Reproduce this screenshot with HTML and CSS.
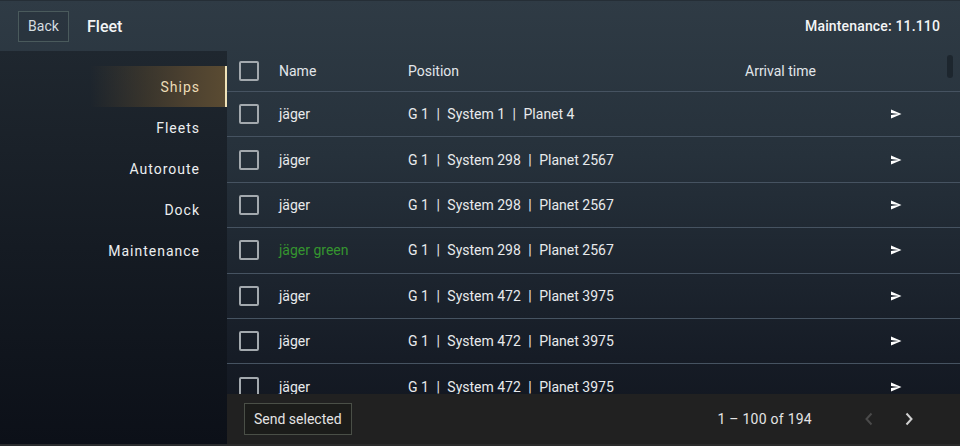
FILE: index.html
```html
<!DOCTYPE html>
<html lang="en">
<head>
<meta charset="utf-8">
<title>Fleet</title>
<link rel="stylesheet" href="styles.css">
</head>
<body>
<div class="app">
  <header class="topbar">
    <button class="btn back">Back</button>
    <h1 class="title">Fleet</h1>
    <div class="maint">Maintenance: 11.110</div>
  </header>
  <div class="main">
    <nav class="sidebar">
      <a class="nav-item active">Ships</a>
      <a class="nav-item">Fleets</a>
      <a class="nav-item">Autoroute</a>
      <a class="nav-item">Dock</a>
      <a class="nav-item">Maintenance</a>
    </nav>
    <section class="content">
      <div class="table-wrap">
        <div class="row head">
          <span class="cell"><span class="cb"></span></span>
          <span class="cell">Name</span>
          <span class="cell">Position</span>
          <span class="cell">Arrival time</span>
          <span class="cell"></span>
        </div>
        <div class="row">
          <span class="cell"><span class="cb"></span></span>
          <span class="cell">jäger</span>
          <span class="cell pos">G 1 <i>|</i> System 1 <i>|</i> Planet 4</span>
          <span class="cell"></span>
          <span class="cell act"><svg viewBox="0 0 24 24" class="send"><path d="M2.01 21L23 12 2.01 3 2 10l15 2-15 2z"/></svg></span>
        </div>
        <div class="row">
          <span class="cell"><span class="cb"></span></span>
          <span class="cell">jäger</span>
          <span class="cell pos">G 1 <i>|</i> System 298 <i>|</i> Planet 2567</span>
          <span class="cell"></span>
          <span class="cell act"><svg viewBox="0 0 24 24" class="send"><path d="M2.01 21L23 12 2.01 3 2 10l15 2-15 2z"/></svg></span>
        </div>
        <div class="row">
          <span class="cell"><span class="cb"></span></span>
          <span class="cell">jäger</span>
          <span class="cell pos">G 1 <i>|</i> System 298 <i>|</i> Planet 2567</span>
          <span class="cell"></span>
          <span class="cell act"><svg viewBox="0 0 24 24" class="send"><path d="M2.01 21L23 12 2.01 3 2 10l15 2-15 2z"/></svg></span>
        </div>
        <div class="row">
          <span class="cell"><span class="cb"></span></span>
          <span class="cell green">jäger green</span>
          <span class="cell pos">G 1 <i>|</i> System 298 <i>|</i> Planet 2567</span>
          <span class="cell"></span>
          <span class="cell act"><svg viewBox="0 0 24 24" class="send"><path d="M2.01 21L23 12 2.01 3 2 10l15 2-15 2z"/></svg></span>
        </div>
        <div class="row">
          <span class="cell"><span class="cb"></span></span>
          <span class="cell">jäger</span>
          <span class="cell pos">G 1 <i>|</i> System 472 <i>|</i> Planet 3975</span>
          <span class="cell"></span>
          <span class="cell act"><svg viewBox="0 0 24 24" class="send"><path d="M2.01 21L23 12 2.01 3 2 10l15 2-15 2z"/></svg></span>
        </div>
        <div class="row">
          <span class="cell"><span class="cb"></span></span>
          <span class="cell">jäger</span>
          <span class="cell pos">G 1 <i>|</i> System 472 <i>|</i> Planet 3975</span>
          <span class="cell"></span>
          <span class="cell act"><svg viewBox="0 0 24 24" class="send"><path d="M2.01 21L23 12 2.01 3 2 10l15 2-15 2z"/></svg></span>
        </div>
        <div class="row">
          <span class="cell"><span class="cb"></span></span>
          <span class="cell">jäger</span>
          <span class="cell pos">G 1 <i>|</i> System 472 <i>|</i> Planet 3975</span>
          <span class="cell"></span>
          <span class="cell act"><svg viewBox="0 0 24 24" class="send"><path d="M2.01 21L23 12 2.01 3 2 10l15 2-15 2z"/></svg></span>
        </div>
        <div class="scroll-thumb"></div>
      </div>
      <footer class="footer">
        <button class="btn send-btn">Send selected</button>
        <span class="range">1 – 100 of 194</span>
        <span class="pager">
          <svg class="chev disabled" viewBox="0 0 10 14"><path d="M7.5 1.5 L2.5 7 L7.5 12.5"/></svg>
          <svg class="chev" viewBox="0 0 10 14"><path d="M2.5 1.5 L7.5 7 L2.5 12.5"/></svg>
        </span>
      </footer>
    </section>
  </div>
</div>
</body>
</html>
```

FILE: styles.css
```css
* { box-sizing: border-box; }
html, body { margin: 0; padding: 0; }
body {
  width: 960px;
  height: 446px;
  overflow: hidden;
  font-family: Roboto, "Liberation Sans", sans-serif;
  color: #e8eaec;
  background: linear-gradient(180deg, #2f3b45 0%, #26313b 35%, #161c26 80%, #10141d 100%);
}
.app {
  height: 446px;
  display: flex;
  flex-direction: column;
}
.topbar {
  height: 51px;
  flex: none;
  display: flex;
  align-items: center;
  padding: 0 20px 0 18px;
  border-top: 1px solid #252e36;
}
.btn {
  font-family: Roboto, "Liberation Sans", sans-serif;
  font-size: 14px;
  color: #d5dde0;
  background: transparent;
  border: 1px solid #4a5a5c;
  border-radius: 0;
  cursor: pointer;
}
.back {
  width: 51px;
  height: 31px;
  padding: 0;
  background: rgba(30, 40, 46, 0.25);
}
.title {
  margin: 0 0 0 18px;
  font-size: 16px;
  font-weight: 500;
  color: #f2f4f5;
}
.maint {
  margin-left: auto;
  font-size: 14px;
  font-weight: 500;
  letter-spacing: 0.15px;
  color: #f4f5f6;
}
.main {
  flex: 1;
  display: flex;
  min-height: 0;
}
.sidebar {
  width: 227px;
  flex: none;
  display: flex;
  flex-direction: column;
  padding-top: 15px;
  background: linear-gradient(180deg, #1f272f 0%, #151b23 50%, #0c1018 100%);
  border-bottom: 2px solid #2a2c2e;
}
.nav-item {
  height: 41px;
  display: flex;
  align-items: center;
  justify-content: flex-end;
  padding-right: 27px;
  font-size: 14px;
  letter-spacing: 1px;
  color: #eceef0;
}
.nav-item.active {
  color: #ecdcb6;
  background: linear-gradient(90deg, rgba(80, 66, 44, 0) 0%, rgba(80, 66, 44, 0) 40%, rgba(80, 66, 44, 0.55) 65%, #4e4230 85%, #5a4b32 100%);
  border-right: 2px solid #efe2b8;
  padding-right: 25px;
}
.content {
  flex: 1;
  display: flex;
  flex-direction: column;
  min-width: 0;
}
.table-wrap {
  flex: 1;
  overflow: hidden;
  position: relative;
}
.row {
  display: grid;
  grid-template-columns: 51px 129px 337px 125px 52px 1fr;
  height: 45.4px;
  align-items: center;
  border-bottom: 1px solid #465361;
  font-size: 14px;
}
.row.head {
  height: 41px;
  color: #e2e6ea;
}
.cell {
  display: flex;
  align-items: center;
  white-space: nowrap;
  padding-left: 1px;
}
.cb {
  margin-left: 11px;
  width: 20px;
  height: 20px;
  border: 2px solid #a3a9ae;
  border-radius: 2px;
}
.green { color: #35952f; }
.pos i {
  font-style: normal;
  margin: 0 7.5px;
}
.act { justify-content: center; }
.send {
  width: 12px;
  height: 12px;
  fill: #ffffff;
}
.scroll-thumb {
  position: absolute;
  top: 4px;
  right: 7px;
  width: 6px;
  height: 23px;
  border-radius: 3px;
  background: #1d262e;
}
.footer {
  height: 52px;
  flex: none;
  display: flex;
  align-items: center;
  padding-left: 17px;
  background: #212121;
  border-bottom: 2px solid #2b2b2b;
}
.send-btn {
  height: 32px;
  padding: 0 9px;
  background: #1b1c1a;
  border-color: #4a4f47;
  color: #e4e4e4;
}
.range {
  margin-left: auto;
  font-size: 14px;
  letter-spacing: 0.25px;
  color: #e4e4e4;
}
.pager {
  display: flex;
  align-items: center;
  gap: 30px;
  margin: 0 46px 0 52px;
}
.chev {
  width: 10px;
  height: 14px;
  fill: none;
  stroke: #d0d0d0;
  stroke-width: 2;
}
.chev.disabled { stroke: #4a4a4a; }
```
